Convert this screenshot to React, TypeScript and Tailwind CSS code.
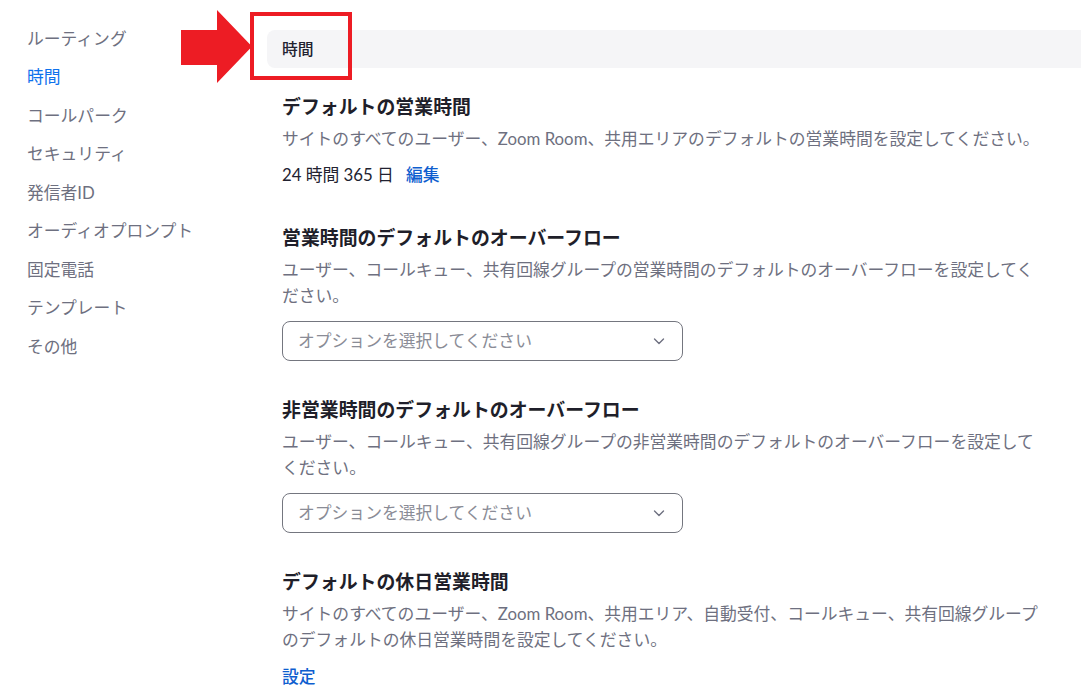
import React from 'react';

const FONT = 'font-["Lato","Noto_Sans_CJK_JP",sans-serif]';

const NAV_ITEMS = [
  'ルーティング',
  '時間',
  'コールパーク',
  'セキュリティ',
  '発信者ID',
  'オーディオプロンプト',
  '固定電話',
  'テンプレート',
  'その他',
];

function Chevron() {
  return (
    <svg width="14" height="14" viewBox="0 0 14 14" fill="none">
      <path d="M2.5 5l4.5 4.5L11.5 5" stroke="#6e7080" strokeWidth="1.4" strokeLinecap="round" strokeLinejoin="round" />
    </svg>
  );
}

function SelectBox() {
  return (
    <div className="mt-[12px] flex h-[40px] w-[401px] items-center justify-between rounded-lg border border-[#74767f] bg-white pl-[15px] pr-[16px]">
      <span className="text-[16.8px] text-[#8a8c96]">オプションを選択してください</span>
      <Chevron />
    </div>
  );
}

function Heading({ children }: { children: React.ReactNode }) {
  return <h2 className="text-[18.9px] font-bold leading-[26px] text-[#1f1f2a]">{children}</h2>;
}

function Desc({ children }: { children: React.ReactNode }) {
  return <p className="mt-[6px] text-[16.8px] leading-[26px] text-[#6e7080]">{children}</p>;
}

export default function App() {
  return (
    <div className={`${FONT} relative flex h-[697px] w-[1081px] overflow-hidden bg-white`}>
      <nav className="flex w-[267px] shrink-0 flex-col pl-[27px] pt-[19px]">
        {NAV_ITEMS.map((item) => (
          <div
            key={item}
            className={
              item === '時間'
                ? 'flex h-[38.5px] items-center text-[16.8px] text-[#0e72ed]'
                : 'flex h-[38.5px] items-center text-[16.8px] text-[#6e7080]'
            }
          >
            {item}
          </div>
        ))}
      </nav>

      <main className="flex-1 pt-[30px]">
        <div className="flex h-[38px] items-center rounded-l-lg bg-[#f5f5f7] pl-[15px]">
          <span className="text-[15.8px] font-medium text-[#222230]">時間</span>
        </div>

        <div className="w-[777px] pl-[15px]">
          <section className="mt-[26px]">
            <Heading>デフォルトの営業時間</Heading>
            <Desc>サイトのすべてのユーザー、Zoom Room、共用エリアのデフォルトの営業時間を設定してください。</Desc>
            <div className="mt-[10px] flex gap-[12px] text-[16.8px] leading-[26px]">
              <span className="text-[#222230]">24 時間 365 日</span>
              <span className="font-medium text-[#0e5ecf]">編集</span>
            </div>
          </section>

          <section className="mt-[37px]">
            <Heading>営業時間のデフォルトのオーバーフロー</Heading>
            <Desc>ユーザー、コールキュー、共有回線グループの営業時間のデフォルトのオーバーフローを設定してください。</Desc>
            <SelectBox />
          </section>

          <section className="mt-[36px]">
            <Heading>非営業時間のデフォルトのオーバーフロー</Heading>
            <Desc>ユーザー、コールキュー、共有回線グループの非営業時間のデフォルトのオーバーフローを設定してください。</Desc>
            <SelectBox />
          </section>

          <section className="mt-[36px]">
            <Heading>デフォルトの休日営業時間</Heading>
            <Desc>サイトのすべてのユーザー、Zoom Room、共用エリア、自動受付、コールキュー、共有回線グループのデフォルトの休日営業時間を設定してください。</Desc>
            <div className="mt-[11px] text-[16.8px] font-medium leading-[26px] text-[#0e5ecf]">設定</div>
          </section>
        </div>
      </main>

      {/* annotation overlay */}
      <svg className="absolute left-[181px] top-[10px]" width="72" height="73" viewBox="0 0 72 73">
        <polygon points="0,20 36,20 36,0 71,36.5 36,73 36,55 0,55" fill="#ed1c24" />
      </svg>
      <div className="absolute left-[250px] top-[12px] h-[68px] w-[102px] border-4 border-[#ed1c24]" />
    </div>
  );
}
